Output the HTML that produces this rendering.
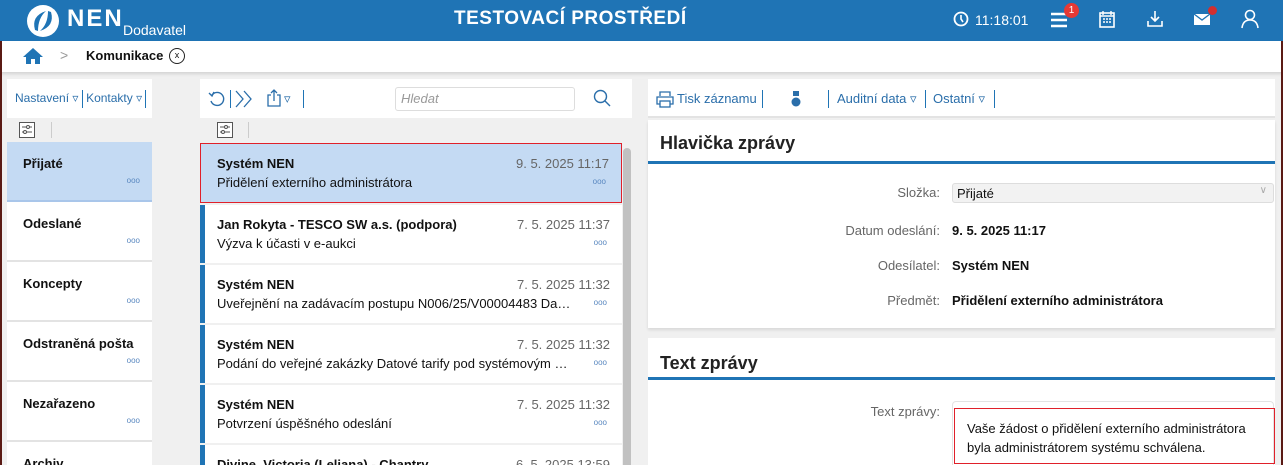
<!DOCTYPE html>
<html><head><meta charset="utf-8"><style>
*{box-sizing:border-box;margin:0;padding:0}
html,body{width:1283px;height:465px;overflow:hidden}
body{background:#f0f0f0;font-family:"Liberation Sans",sans-serif;font-size:13px;color:#111;position:relative}
.abs{position:absolute}
.top{left:0;top:0;width:1283px;height:41px;background:#1f74b5;color:#fff}
.bc{left:0;top:41px;width:1283px;height:31px;background:#fff;box-shadow:0 2px 3px rgba(0,0,0,.12)}
.panel{background:#fff}
.tb{color:#2a6eaa;font-size:13px;white-space:nowrap}
.sep{display:inline-block;width:1px;height:18px;background:#1f74b5;vertical-align:middle}
.item{position:absolute;left:0;width:145px;height:60px;background:#fff;border-bottom:2px solid #e3e3e3}
.item b{position:absolute;left:16px;top:14px;font-size:13px;font-weight:bold}
.dots{position:absolute;color:#5a88c0;font-size:8px}
.msg{position:absolute;left:0;width:422px;height:58px;background:#fff;border-left:5px solid #1f74b5}
.msg .f{position:absolute;left:12px;top:12px;font-weight:bold;font-size:13px}
.msg .d{position:absolute;right:12px;top:12px;color:#666;font-size:13px}
.msg .s{position:absolute;left:12px;top:31px;font-size:13px;white-space:nowrap;width:355px;overflow:hidden;text-overflow:ellipsis}
.lab{position:absolute;right:335px;color:#666;font-size:13px;text-align:right}
.val{position:absolute;left:304px;font-weight:bold;font-size:13px}
h2{position:absolute;left:12px;font-size:18px;font-weight:bold;color:#222}
.clip{overflow:hidden}
</style></head><body>
<div class="abs top">
 <svg class="abs" style="left:26px;top:4px" width="34" height="34" viewBox="0 0 34 34"><circle cx="17" cy="17" r="16" fill="#fff"/><path d="M9 26 Q5 12 20 7 Q12 14 12 27Z M25 8 Q29 22 14 27 Q22 20 22 7Z" fill="#1f74b5"/></svg>
 <div class="abs" style="left:67px;top:5px;font-size:24px;font-weight:bold;letter-spacing:2px">NEN</div>
 <div class="abs" style="left:123px;top:22px;font-size:14px">Dodavatel</div>
 <div class="abs" style="left:454px;top:8px;font-size:19px;font-weight:bold;letter-spacing:0.5px">TESTOVACÍ PROSTŘEDÍ</div>
 <svg class="abs" style="left:953px;top:11px" width="16" height="16"><circle cx="8" cy="8" r="6.5" fill="none" stroke="#fff" stroke-width="1.8"/><path d="M8 4v4l2 3" stroke="#fff" stroke-width="1.6" fill="none"/></svg>
 <div class="abs" style="left:975px;top:12px;font-size:14px">11:18:01</div>
 <svg class="abs" style="left:1050px;top:12px" width="18" height="16"><path d="M1 2h16M1 8h16M1 14h16" stroke="#fff" stroke-width="2.4"/></svg>
 <div class="abs" style="left:1064px;top:3px;width:15px;height:15px;border-radius:50%;background:#e53935;font-size:10px;text-align:center;line-height:15px">1</div>
 <svg class="abs" style="left:1099px;top:10px" width="16" height="18"><rect x="1" y="3" width="14" height="14" fill="none" stroke="#fff" stroke-width="1.6"/><path d="M1 6h14M4 1v4M12 1v4M4 9h2M7 9h2M10 9h2M4 12h2M7 12h2M10 12h2" stroke="#fff" stroke-width="1.4"/></svg>
 <svg class="abs" style="left:1146px;top:10px" width="18" height="18"><path d="M9 1v9M5 7l4 4 4-4M2 11v5h14v-5" stroke="#fff" stroke-width="1.6" fill="none"/></svg>
 <svg class="abs" style="left:1193px;top:13px" width="18" height="13"><rect x="1" y="1" width="16" height="11" fill="#fff"/><path d="M1 1l8 6 8-6" stroke="#1f74b5" stroke-width="1.3" fill="none"/></svg>
 <div class="abs" style="left:1208px;top:6px;width:9px;height:9px;border-radius:50%;background:#d32f2f"></div>
 <svg class="abs" style="left:1241px;top:9px" width="18" height="20"><circle cx="9" cy="6" r="4.5" fill="none" stroke="#fff" stroke-width="1.6"/><path d="M1 19q1-8 8-8t8 8" stroke="#fff" stroke-width="1.6" fill="none"/></svg>
</div>
<div class="abs bc">
 <svg class="abs" style="left:22px;top:6px" width="22" height="18"><path d="M11 1L1 10h3v7h5v-5h4v5h5v-7h3z" fill="#1f74b5"/></svg>
 <div class="abs" style="left:60px;top:6px;color:#999;font-size:14px">&gt;</div>
 <div class="abs" style="left:86px;top:7px;font-weight:bold;font-size:13px">Komunikace</div>
 <div class="abs" style="left:169px;top:7px;width:16px;height:16px;border:1.5px solid #222;border-radius:50%;font-size:9px;text-align:center;line-height:13px">x</div>
</div>
<!-- left panel -->
<div class="abs panel tb" style="left:7px;top:79px;width:145px;height:39px;padding:11px 0 0 8px;font-size:12px">Nastavení ▿ <span class="sep"></span> Kontakty ▿ <span class="sep"></span></div>
<div class="abs" style="left:7px;top:118px;width:145px;height:24px;background:#f0f0f0">
 <svg class="abs" style="left:12px;top:4px" width="16" height="16"><rect x="0.5" y="0.5" width="15" height="15" fill="#fff" stroke="#555"/><path d="M3 5h10M3 10h10" stroke="#555"/><circle cx="9" cy="5" r="1.5" fill="#fff" stroke="#555"/><circle cx="6" cy="10" r="1.5" fill="#fff" stroke="#555"/></svg>
 <div class="abs" style="left:44px;top:4px;width:1px;height:16px;background:#ccc"></div>
</div>
<div class="abs clip" style="left:7px;top:142px;width:145px;height:323px">
 <div class="item" style="top:0;background:#c4daf3;border-bottom-color:#a9c6ea"><b>Přijaté</b><span class="dots" style="right:12px;top:34px">ooo</span></div>
 <div class="item" style="top:60px"><b>Odeslané</b><span class="dots" style="right:12px;top:34px">ooo</span></div>
 <div class="item" style="top:120px"><b>Koncepty</b><span class="dots" style="right:12px;top:34px">ooo</span></div>
 <div class="item" style="top:180px"><b>Odstraněná pošta</b><span class="dots" style="right:12px;top:34px">ooo</span></div>
 <div class="item" style="top:240px"><b>Nezařazeno</b><span class="dots" style="right:12px;top:34px">ooo</span></div>
 <div class="item" style="top:300px"><b>Archiv</b></div>
</div>
<!-- middle panel -->
<div class="abs panel" style="left:200px;top:79px;width:432px;height:39px">
 <svg class="abs" style="left:8px;top:11px" width="18" height="18"><path d="M4 5A6.5 6.5 0 1 1 3 11" stroke="#2a6eaa" stroke-width="1.4" fill="none"/><path d="M1 3l3 3 2-4" stroke="#2a6eaa" stroke-width="1.4" fill="none"/></svg>
 <div class="abs sep" style="left:30px;top:11px"></div>
 <svg class="abs" style="left:34px;top:11px" width="20" height="18"><path d="M2 1l7 8-7 8M10 1l7 8-7 8" stroke="#2a6eaa" stroke-width="1.3" fill="none"/></svg>
 <svg class="abs" style="left:66px;top:10px" width="16" height="18"><path d="M5 6H2v11h12V6h-3M8 1v11M5 4l3-3 3 3" stroke="#2a6eaa" stroke-width="1.3" fill="none"/></svg>
 <span class="abs tb" style="left:84px;top:12px">▿</span>
 <div class="abs sep" style="left:103px;top:11px"></div>
 <div class="abs" style="left:195px;top:8px;width:180px;height:24px;border:1px solid #ddd;border-radius:3px;color:#999;font-style:italic;padding:3px 5px">Hledat</div>
 <svg class="abs" style="left:393px;top:10px" width="18" height="18"><circle cx="7.5" cy="7.5" r="6" fill="none" stroke="#2a6eaa" stroke-width="1.4"/><path d="M12 12l5 5" stroke="#2a6eaa" stroke-width="1.4"/></svg>
</div>
<div class="abs" style="left:200px;top:118px;width:432px;height:24px">
 <svg class="abs" style="left:17px;top:4px" width="16" height="16"><rect x="0.5" y="0.5" width="15" height="15" fill="#fff" stroke="#555"/><path d="M3 5h10M3 10h10" stroke="#555"/><circle cx="9" cy="5" r="1.5" fill="#fff" stroke="#555"/><circle cx="6" cy="10" r="1.5" fill="#fff" stroke="#555"/></svg>
 <div class="abs" style="left:48px;top:4px;width:1px;height:16px;background:#ccc"></div>
</div>
<div class="abs clip" style="left:622px;top:142px;width:10px;height:323px;background:#f0f0f0"><div class="abs" style="left:1px;top:6px;width:8px;height:317px;background:#c1c1c1;border-radius:4px 4px 0 0"></div></div>
<div class="abs clip" style="left:200px;top:142px;width:422px;height:323px">
 <div class="msg" style="top:1px;height:60px;background:#c4daf3;border:1px solid #e0202a"><span class="f" style="left:16px">Systém NEN</span><span class="d">9. 5. 2025 11:17</span><span class="s" style="left:16px">Přidělení externího administrátora</span><span class="dots" style="right:15px;top:33px">ooo</span></div>
 <div class="msg" style="top:63px"><span class="f">Jan Rokyta - TESCO SW a.s. (podpora)</span><span class="d">7. 5. 2025 11:37</span><span class="s">Výzva k účasti v e-aukci</span><span class="dots" style="right:15px;top:33px">ooo</span></div>
 <div class="msg" style="top:123px"><span class="f">Systém NEN</span><span class="d">7. 5. 2025 11:32</span><span class="s">Uveřejnění na zadávacím postupu N006/25/V00004483 Datové tarify</span><span class="dots" style="right:15px;top:33px">ooo</span></div>
 <div class="msg" style="top:183px"><span class="f">Systém NEN</span><span class="d">7. 5. 2025 11:32</span><span class="s">Podání do veřejné zakázky Datové tarify pod systémovým číslem</span><span class="dots" style="right:15px;top:33px">ooo</span></div>
 <div class="msg" style="top:243px"><span class="f">Systém NEN</span><span class="d">7. 5. 2025 11:32</span><span class="s">Potvrzení úspěšného odeslání</span><span class="dots" style="right:15px;top:33px">ooo</span></div>
 <div class="msg" style="top:303px;height:20px"><span class="f">Divine, Victoria (Leliana) - Chantry</span><span class="d">6. 5. 2025 13:59</span></div>
</div>
<!-- right panel -->
<div class="abs panel tb" style="left:648px;top:79px;width:627px;height:39px;border-bottom:2px solid #e3e3e3">
 <svg class="abs" style="left:8px;top:12px" width="18" height="17"><path d="M4 5V1h10v4M4 13H1V6h16v7h-3" stroke="#2a6eaa" stroke-width="1.3" fill="none"/><rect x="4" y="10" width="10" height="6" fill="#fff" stroke="#2a6eaa" stroke-width="1.3"/></svg>
 <span class="abs" style="left:29px;top:12px">Tisk záznamu</span>
 <div class="abs sep" style="left:114px;top:11px"></div>
 <svg class="abs" style="left:143px;top:11px" width="10" height="18"><rect x="2" y="1" width="6" height="5" fill="#2a6eaa"/><circle cx="5" cy="12" r="4.5" fill="#2a6eaa"/></svg>
 <div class="abs sep" style="left:180px;top:11px"></div>
 <span class="abs" style="left:189px;top:12px">Auditní data ▿</span>
 <div class="abs sep" style="left:277px;top:11px"></div>
 <span class="abs" style="left:285px;top:12px">Ostatní ▿</span>
 <div class="abs sep" style="left:346px;top:11px"></div>
</div>
<div class="abs panel" style="left:648px;top:120px;width:627px;height:208px;box-shadow:0 2px 3px rgba(0,0,0,.1)">
 <h2 style="top:13px">Hlavička zprávy</h2>
 <div class="abs" style="left:0;top:41px;width:627px;height:3px;background:#1f74b5"></div>
 <span class="lab" style="top:65px">Složka:</span>
 <div class="abs" style="left:304px;top:63px;width:322px;height:20px;background:#f2f2f2;border:1px solid #ddd;border-radius:3px;padding:2px 4px;font-size:13px">Přijaté<span style="position:absolute;right:6px;top:1px;color:#aaa;font-size:10px">∨</span></div>
 <span class="lab" style="top:103px">Datum odeslání:</span><span class="val" style="top:103px">9. 5. 2025 11:17</span>
 <span class="lab" style="top:138px">Odesílatel:</span><span class="val" style="top:138px">Systém NEN</span>
 <span class="lab" style="top:173px">Předmět:</span><span class="val" style="top:173px">Přidělení externího administrátora</span>
</div>
<div class="abs panel clip" style="left:648px;top:338px;width:627px;height:127px">
 <h2 style="top:15px">Text zprávy</h2>
 <div class="abs" style="left:0;top:39px;width:627px;height:3px;background:#1f74b5"></div>
 <span class="lab" style="top:66px">Text zprávy:</span>
 <div class="abs" style="left:304px;top:63px;width:322px;height:64px;border:1px solid #e3e3e3;border-bottom:none;border-radius:4px 4px 0 0"></div>
 <div class="abs" style="left:306px;top:70px;width:321px;height:56px;border:1px solid #e0202a;padding:10px 12px;font-size:13px;line-height:19px">Vaše žádost o přidělení externího administrátora<br>byla administrátorem systému schválena.</div>
</div>
<div class="abs" style="left:0;top:41px;width:2px;height:424px;background:#5a1a14"></div>
<div class="abs" style="left:1281px;top:41px;width:2px;height:424px;background:#5a1a14"></div>
</body></html>
